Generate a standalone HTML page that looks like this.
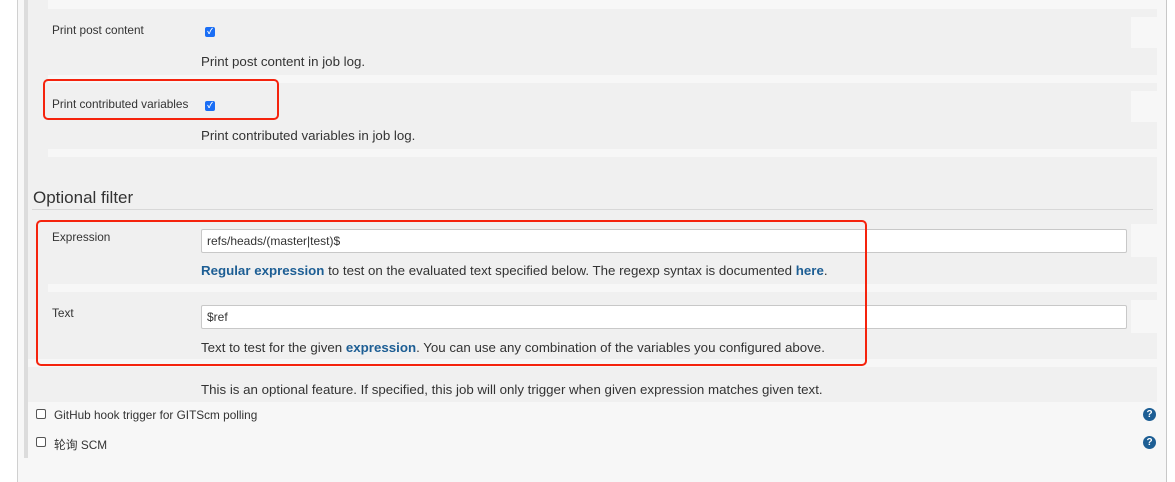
<!DOCTYPE html>
<html><head><meta charset="utf-8"><style>
*{margin:0;padding:0;box-sizing:border-box}
body{width:1175px;height:482px;background:#fff;position:relative;overflow:hidden;font-family:"Liberation Sans","Noto Sans CJK SC",sans-serif;color:#333}
.a{position:absolute;white-space:nowrap}
.lbl{font-size:11.8px;color:#333}
.desc{font-size:13.3px;color:#333}
.cb{width:10px;height:10px;background:#1a6ef5;border-radius:2px;color:#fff;font-size:8px;line-height:10px;text-align:center;font-weight:bold}
.ucb{width:10px;height:10px;border:1px solid #555;border-radius:2px;background:#fff}
.inp{background:#fff;border:1px solid #c8c8c8;border-radius:2px;font-size:12px;padding-left:5px;line-height:22px;height:24px}
a{color:#1d5e94;font-weight:bold;text-decoration:none}
.red{border:2.5px solid #f5230d;border-radius:5px}
.q{width:13px;height:13px;border-radius:50%;background:#1d5e94;color:#fff;font-size:10px;font-weight:bold;text-align:center;line-height:13px}
</style></head><body>
<div class="a" style="left:17px;top:0;width:1150px;height:482px;background:#f7f7f7;border-left:1px solid #d0d0d0;border-right:1px solid #c8c8c8"></div>
<div class="a" style="left:24px;top:0;width:4px;height:458px;background:#dcdcdc"></div>
<div class="a" style="left:28px;top:0;width:1129px;height:402px;background:#f0f0f0"></div>
<div class="a" style="left:48px;top:0;width:1109px;height:9px;background:#f7f7f7"></div>
<div class="a" style="left:48px;top:75px;width:1109px;height:8px;background:#f7f7f7"></div>
<div class="a" style="left:48px;top:149px;width:1109px;height:8px;background:#f7f7f7"></div>
<div class="a" style="left:48px;top:284px;width:1109px;height:8px;background:#f7f7f7"></div>
<div class="a" style="left:28px;top:359px;width:1129px;height:8px;background:#f7f7f7"></div>
<div class="a" style="left:1131px;top:17px;width:26px;height:31px;background:#f7f7f7"></div>
<div class="a" style="left:1131px;top:91px;width:26px;height:31px;background:#f7f7f7"></div>
<div class="a" style="left:1131px;top:224px;width:26px;height:33px;background:#f7f7f7"></div>
<div class="a" style="left:1131px;top:300px;width:26px;height:33px;background:#f7f7f7"></div>

<div class="a lbl" style="left:52px;top:23px">Print post content</div>
<div class="a cb" style="left:205px;top:27px">✓</div>
<div class="a desc" style="left:201px;top:54px">Print post content in job log.</div>

<div class="a lbl" style="left:52px;top:97px">Print contributed variables</div>
<div class="a cb" style="left:205px;top:101px">✓</div>
<div class="a desc" style="left:201px;top:128px">Print contributed variables in job log.</div>
<div class="a red" style="left:43px;top:79px;width:236px;height:41px"></div>

<div class="a" style="left:33px;top:188px;font-size:17px;color:#333">Optional filter</div>
<div class="a" style="left:32px;top:209px;width:1121px;height:1px;background:#d8d8d8"></div>

<div class="a lbl" style="left:52px;top:230px">Expression</div>
<div class="a inp" style="left:201px;top:229px;width:926px">refs/heads/(master|test)$</div>
<div class="a desc" style="left:201px;top:263px"><a>Regular expression</a> to test on the evaluated text specified below. The regexp syntax is documented <a>here</a>.</div>

<div class="a lbl" style="left:52px;top:306px">Text</div>
<div class="a inp" style="left:201px;top:305px;width:926px">$ref</div>
<div class="a desc" style="left:201px;top:340px">Text to test for the given <a>expression</a>. You can use any combination of the variables you configured above.</div>
<div class="a red" style="left:36px;top:220px;width:831px;height:146px"></div>

<div class="a desc" style="left:201px;top:382px">This is an optional feature. If specified, this job will only trigger when given expression matches given text.</div>

<div class="a ucb" style="left:36px;top:409px"></div>
<div class="a lbl" style="left:54px;top:408px">GitHub hook trigger for GITScm polling</div>
<div class="a ucb" style="left:36px;top:437px"></div>
<div class="a lbl" style="left:54px;top:436px">轮询 SCM</div>
<div class="a q" style="left:1143px;top:408px">?</div>
<div class="a q" style="left:1143px;top:436px">?</div>
</body></html>
